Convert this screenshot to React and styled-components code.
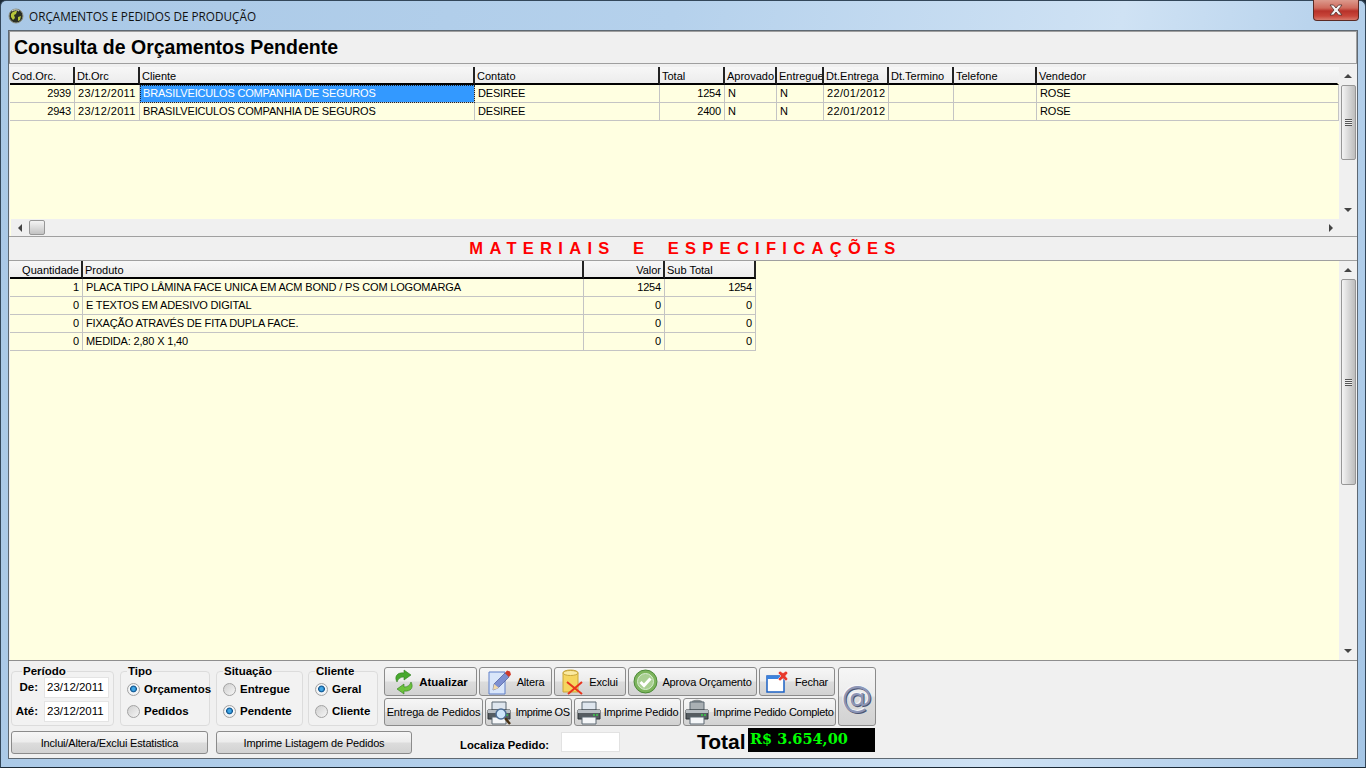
import styled, { createGlobalStyle } from "styled-components";

const GlobalStyle = createGlobalStyle`
  html, body {
    margin: 0;
    padding: 0;
    background: #1c2a36;
    overflow: hidden;
  }
  * { box-sizing: border-box; }
`;

const Frame = styled.div`
  width: 1366px;
  height: 768px;
  display: flex;
  flex-direction: column;
  padding: 0 8px 8px 8px;
  border: 1px solid #33475a;
  border-bottom: 1px solid #1c2a36;
  border-radius: 6px 6px 0 0;
  background: linear-gradient(100deg, #a9c8e6 0%, #b5d1ec 45%, #cfe2f4 75%, #a5c6e6 100%);
  font-family: "Liberation Sans", Arial, sans-serif;
  font-size: 11px;
  color: #000;
`;

const TitleBar = styled.div`
  height: 29px;
  margin: 0 -1px;
  display: flex;
  align-items: center;
  gap: 5px;
  font-family: "Open Sans", sans-serif;
  font-size: 11.75px;
  color: #111;
  flex-shrink: 0;
  position: relative;
`;

const CloseBtn = styled.div`
  position: absolute;
  right: -1px;
  top: -1px;
  width: 46px;
  height: 21px;
  border: 1px solid #5b2a24;
  border-top: none;
  border-radius: 0 0 4px 4px;
  background: linear-gradient(#dc9a8d 0%, #cf6a5c 40%, #b8322a 55%, #c8463a 80%, #d77a6c 100%);
  display: flex;
  align-items: center;
  justify-content: center;
`;

const Client = styled.div`
  flex: 1;
  min-height: 0;
  margin: 0 -1px;
  display: flex;
  flex-direction: column;
  background: #f0f0f0;
  border: 1px solid #5e6872;
`;

const HeaderPanel = styled.div`
  height: 33px;
  flex-shrink: 0;
  padding-left: 4px;
  display: flex;
  align-items: center;
  border: 1px solid #9f9f9f;
  border-left-color: #8a8a8a;
  font-size: 19.5px;
  font-weight: bold;
`;

const GridArea = styled.div`
  display: flex;
  flex-shrink: 0;
  height: ${p => p.$height}px;
  margin-top: ${p => p.$top || 0}px;
  padding-left: 1px;
`;

const GridBody = styled.div`
  flex: 1;
  min-width: 0;
  display: flex;
  flex-direction: column;
  background: #ffffe1;
`;

const HeadRow = styled.div`
  height: 18px;
  flex-shrink: 0;
  display: grid;
  grid-template-columns: ${p => p.$cols};
`;

const HeadCell = styled.div`
  height: 18px;
  line-height: 18px;
  padding: 0 0 0 2px;
  white-space: nowrap;
  overflow: hidden;
  text-align: ${p => p.$right ? "right" : "left"};
  padding-right: ${p => p.$right ? 2 : 0}px;
  border-right: 2px solid ${p => p.$open ? "transparent" : "#222"};
  border-bottom: 2px solid #000;
  background: linear-gradient(#f7f7f7, #ececec);
`;

const Row = styled.div`
  height: 18px;
  flex-shrink: 0;
  display: grid;
  grid-template-columns: ${p => p.$cols};
`;

const Cell = styled.div`
  height: 18px;
  line-height: 17px;
  padding: 0 3px 0 3px;
  white-space: nowrap;
  overflow: hidden;
  letter-spacing: ${p => p.$date ? "0.35px" : "-0.17px"};
  text-align: ${p => p.$right ? "right" : "left"};
  border-right: 1px solid #c4c4c4;
  border-bottom: 1px solid #c4c4c4;
  ${p => p.$selected && `
    background: #3399ff;
    color: #fff;
    outline: 1px dotted #222;
    outline-offset: -1px;
  `}
`;

const VScroll = styled.div`
  width: 18px;
  flex-shrink: 0;
  display: flex;
  flex-direction: column;
  align-items: center;
  background: #f0f0f0;
`;

const ArrowBox = styled.div`
  height: 18px;
  width: 17px;
  flex-shrink: 0;
  margin-bottom: ${p => p.$bottom || 0}px;
  display: flex;
  align-items: center;
  justify-content: center;
`;

const ArrowUp = styled.span`
  width: 0;
  height: 0;
  border-left: 4px solid transparent;
  border-right: 4px solid transparent;
  border-bottom: 4px solid #444;
`;

const ArrowDown = styled(ArrowUp)`
  border-bottom: none;
  border-top: 4px solid #444;
`;

const ArrowLeft = styled.span`
  width: 0;
  height: 0;
  border-top: 4px solid transparent;
  border-bottom: 4px solid transparent;
  border-right: 4px solid #444;
`;

const ArrowRight = styled(ArrowLeft)`
  border-right: none;
  border-left: 4px solid #444;
`;

const VThumb = styled.div`
  width: 15px;
  height: ${p => p.$height}px;
  flex-shrink: 0;
  border: 1px solid #979797;
  border-radius: 2px;
  background: linear-gradient(90deg, #f4f4f4, #d8d8d8 50%, #bdbdbd);
  display: flex;
  align-items: center;
  justify-content: center;
`;

const Grip = styled.div`
  width: 7px;
  height: 7px;
  background: repeating-linear-gradient(#555 0 1px, #eee 1px 2px);
`;

const Spacer = styled.div`
  flex: 1;
`;

const HScroll = styled.div`
  height: 17px;
  flex-shrink: 0;
  margin-left: 1px;
  display: flex;
  align-items: center;
  background: #f0f0f0;
`;

const HThumb = styled.div`
  width: 16px;
  height: 15px;
  margin-left: 1px;
  border: 1px solid #979797;
  border-radius: 2px;
  background: linear-gradient(#f4f4f4, #dcdcdc 50%, #c2c2c2);
`;

const SectionTitle = styled.div`
  height: 25px;
  flex-shrink: 0;
  padding-left: 5px;
  border-top: 1px solid #a0a0a0;
  border-bottom: 1px solid #a0a0a0;
  text-align: center;
  line-height: 22px;
  color: #ff0000;
  font-size: 16.5px;
  font-weight: bold;
  letter-spacing: 6.3px;
  word-spacing: 6.5px;
  white-space: pre;
`;

const BottomPanel = styled.div`
  flex: 1;
  min-height: 0;
  border-top: 1px solid #8e8e8e;
  display: flex;
  flex-direction: column;
  padding: 4px 0 0 2px;
`;

const TopLine = styled.div`
  display: flex;
  height: 63px;
`;

const GroupBox = styled.fieldset`
  width: ${p => p.$w}px;
  height: 61px;
  margin: 0 ${p => p.$gap}px 0 0;
  padding: ${p => p.$pad || 0}px 0 0 0;
  min-width: 0;
  border: 1px solid #dcdcdc;
  border-radius: 4px;
  display: flex;
  flex-direction: column;
  background: #f2f2f2;
`;

const Legend = styled.legend`
  margin-left: ${p => p.$left || 6}px;
  padding: 0 1px;
  font-size: 11.5px;
  font-weight: bold;
  line-height: 12px;
`;

const DateRow = styled.div`
  display: flex;
  align-items: flex-start;
  height: 25px;
  justify-content: flex-end;
  padding-right: 4px;
  gap: 6px;
`;

const FieldLabel = styled.span`
  font-weight: bold;
  font-size: 11.5px;
  line-height: 21px;
`;

const DateBox = styled.div`
  width: 65px;
  height: 21px;
  background: #fff;
  border: 1px solid #e4e4e4;
  line-height: 18px;
  padding-left: 2px;
  font-size: 11.5px;
`;

const RadioRow = styled.div`
  display: flex;
  align-items: center;
  height: 22px;
  padding-left: 6px;
  gap: 4px;
  font-weight: bold;
  font-size: 11.5px;
  white-space: nowrap;
`;

const Radio = styled.span`
  width: 13px;
  height: 13px;
  flex-shrink: 0;
  border-radius: 50%;
  border: 1px solid #a2a2a2;
  background: ${p => p.$on
    ? "radial-gradient(circle at 50% 45%, #3fa6e6 0 1.5px, #0a4f8a 3px, #f6f8fa 3.8px, #e2e2e2 100%)"
    : "linear-gradient(135deg, #cfcfcf, #f6f6f6)"};
`;

const ButtonsCol = styled.div`
  display: flex;
  flex-direction: column;
  gap: 2px;
  margin-top: 2px;
`;

const ButtonLine = styled.div`
  display: flex;
  gap: 2px;
`;

const Btn = styled.div`
  width: ${p => p.$w}px;
  height: ${p => p.$h || 29}px;
  flex-shrink: 0;
  display: flex;
  align-items: center;
  justify-content: center;
  gap: ${p => p.$gap ?? 5}px;
  border: 1px solid #8b8b8b;
  border-radius: 3px;
  background: linear-gradient(#f6f6f6 0%, #ececec 48%, #dcdcdc 52%, #d2d2d2 100%);
  font-weight: ${p => p.$bold ? "bold" : "normal"};
  font-size: ${p => p.$bold ? "11.5px" : "11px"};
  letter-spacing: ${p => p.$bold ? 0 : (p.$ls ?? -0.17)}px;
  white-space: nowrap;
`;

const AtBtn = styled(Btn)`
  margin: 2px 0 0 2px;
  font-size: 31px;
  font-family: "DejaVu Sans", sans-serif;
  color: #8d96b6;
  text-shadow: 1px 1px 0 #4a5472, -1px -1px 0 #f4f6fb;
`;

const BottomLine = styled.div`
  display: flex;
  align-items: flex-start;
`;

const WideBtn = styled(Btn)`
  margin: 3px ${p => p.$gap}px 0 0;
  height: 23px;
`;

const FindLabel = styled.span`
  width: 90px;
  margin: 11px 11px 0 0;
  font-weight: bold;
  font-size: 11.3px;
  white-space: nowrap;
`;

const FindBox = styled.div`
  width: 59px;
  height: 20px;
  margin: 4px 77px 0 0;
  background: #fff;
  border: 1px solid #e2e2e2;
`;

const TotalLabel = styled.span`
  width: 51px;
  font-size: 21px;
  font-weight: bold;
  line-height: 25px;
  margin-top: 1px;
`;

const TotalBox = styled.div`
  width: 127px;
  height: 24px;
  background: #000;
  color: #00ff00;
  padding-left: 2px;
  line-height: 22px;
  font-family: "DejaVu Serif", serif;
  font-size: 14.5px;
  font-weight: bold;
`;

/* icons */
const Globe = () => (
  <svg width="16" height="16" viewBox="0 0 16 16">
    <circle cx="8" cy="8" r="7" fill="#2b2f24" stroke="#8b8e80" />
    <path d="M3 6c2-3 4-3 6-3l-1 3-2 1 1 3-2 2-2-3zM10 9l3-1-1 4-2 1z" fill="#b9c63a" />
    <path d="M4 3c2-1.500 5-1.500 7 0" stroke="#e8e8d8" fill="none" />
  </svg>
);

const CloseGlyph = () => (
  <svg width="16" height="12" viewBox="0 0 16 12">
    <path d="M2 1h3.500L8 4l2.500-3H14l-4 5 4 5h-3.500L8 8l-2.500 3H2l4-5z" fill="#f4f4f4" stroke="#50312c" strokeWidth="0.8" />
  </svg>
);

const SyncIcon = () => (
  <svg width="22" height="26" viewBox="0 0 22 26">
    <path d="M11 1l7 5-7 5V8C7 8 5 10 4 13 1 8 4 3 11 4z" fill="#48a82e" stroke="#2f7d1f" strokeWidth="0.6" />
    <path d="M11 25l-7-5 7-5v3c4 0 6-2 7-5 3 5 0 10-7 9z" fill="#6cc23c" stroke="#2f7d1f" strokeWidth="0.6" />
  </svg>
);

const EditIcon = () => (
  <svg width="26" height="26" viewBox="0 0 26 26">
    <path d="M2 3h16v22H2z" fill="#d9e6fa" stroke="#5f7fc8" />
    <path d="M6 21l1-6L18 4l4 4-11 11z" fill="#7d8fd0" stroke="#3b4a8c" strokeWidth="0.6" />
    <path d="M18 4l2-2.500 3 1 1 3-2 2.500z" fill="#d03a2a" />
    <path d="M6 21l1-6 5 4z" fill="#f0d8a8" />
  </svg>
);

const DeleteIcon = () => (
  <svg width="22" height="26" viewBox="0 0 22 26">
    <path d="M1 4c0-4 15-4 15 0v19H1z" fill="#f5d55f" stroke="#c9a63a" />
    <ellipse cx="8.500" cy="4" rx="7.500" ry="2.500" fill="#fbeaa0" stroke="#c9a63a" />
    <path d="M5 13l15 12M20 13L6 25" stroke="#e8331c" strokeWidth="2" />
  </svg>
);

const CheckIcon = () => (
  <svg width="25" height="25" viewBox="0 0 25 25">
    <circle cx="12.500" cy="12.500" r="11.500" fill="#7cb45c" stroke="#4d8a3a" />
    <circle cx="12.500" cy="12.500" r="8" fill="#a9cf92" stroke="#d8ecd0" />
    <path d="M7.500 13l3.500 3.500 6.500-7" stroke="#fff" strokeWidth="3" fill="none" />
  </svg>
);

const WinCloseIcon = () => (
  <svg width="24" height="24" viewBox="0 0 24 24">
    <path d="M1 6h17v16H1z" fill="#fff" stroke="#1c62c4" strokeWidth="1.500" />
    <path d="M1 6h17v3H1z" fill="#3b82de" />
    <path d="M14 1l3 2 3-2 2 2-2.500 3L22 9l-2 2-3-2.500L14 11l-2-2 3-3-3-3z" fill="#e8392c" stroke="#fff" strokeWidth="0.5" />
  </svg>
);

const PrinterIcon = ({ lock, lens }) => (
  <svg width="24" height="26" viewBox="0 0 24 26">
    {lock && <path d="M7 9V5c0-4 10-4 10 0v4" fill="none" stroke="#8a8f92" strokeWidth="2.500" />}
    <path d="M5 3h14v8H5z" fill={lock ? "#aab0b4" : "#dfe6ee"} stroke="#5b6670" />
    <path d="M1 11h22v9H1z" fill="#555c61" stroke="#2f3438" />
    <path d="M1 11h22v3H1z" fill="#b9bfc4" />
    <circle cx="17" cy="16" r="1" fill="#3ad04a" />
    <circle cx="20" cy="16" r="1" fill="#3ad04a" />
    <path d="M5 18h14v7H5z" fill="#f4f6f8" stroke="#5b6670" />
    {lens && <>
      <circle cx="14" cy="15" r="5" fill="#cfe6fa" stroke="#4d6d94" strokeWidth="1.500" />
      <path d="M18 19l5 6" stroke="#4a3316" strokeWidth="2.500" />
    </>}
  </svg>
);

const orcCols = "65px 65px 335px 185px 65px 52px 47px 65px 65px 83px 1fr";
const orcHead = ["Cod.Orc.", "Dt.Orc", "Cliente", "Contato", "Total", "Aprovado", "Entregue", "Dt.Entrega", "Dt.Termino", "Telefone", "Vendedor"];
const orcRows = [
  ["2939", "23/12/2011", "BRASILVEICULOS COMPANHIA DE SEGUROS", "DESIREE", "1254", "N", "N", "22/01/2012", "", "", "ROSE"],
  ["2943", "23/12/2011", "BRASILVEICULOS COMPANHIA DE SEGUROS", "DESIREE", "2400", "N", "N", "22/01/2012", "", "", "ROSE"],
];
const orcRight = [0, 4];

const matCols = "73px 501px 81px 91px";
const matHead = ["Quantidade", "Produto", "Valor", "Sub Total"];
const matRows = [
  ["1", "PLACA TIPO LÂMINA FACE UNICA EM ACM BOND / PS COM LOGOMARGA", "1254", "1254"],
  ["0", "E TEXTOS EM  ADESIVO DIGITAL", "0", "0"],
  ["0", "FIXAÇÃO ATRAVÉS DE FITA DUPLA FACE.", "0", "0"],
  ["0", "MEDIDA: 2,80 X 1,40", "0", "0"],
];
const matRight = [0, 2, 3];
const isDate = text => /^\d\d\/\d\d\//.test(text);

const App = () => (
  <>
    <GlobalStyle />
    <Frame>
      <TitleBar>
        <Globe />
        <span>ORÇAMENTOS E PEDIDOS DE PRODUÇÃO</span>
        <CloseBtn><CloseGlyph /></CloseBtn>
      </TitleBar>
      <Client>
        <HeaderPanel>Consulta de Orçamentos Pendente</HeaderPanel>
        <GridArea $height={169} $top={3}>
          <GridBody>
            <HeadRow $cols={orcCols}>
              {orcHead.map((h, i) => <HeadCell key={h} $open={i === orcHead.length - 1}>{h}</HeadCell>)}
            </HeadRow>
            {orcRows.map((r, i) => (
              <Row key={i} $cols={orcCols}>
                {r.map((c, j) => (
                  <Cell key={j} $date={isDate(c)} $right={orcRight.includes(j)} $selected={i === 0 && j === 2}>{c}</Cell>
                ))}
              </Row>
            ))}
            <Spacer />
            <HScroll>
              <ArrowBox><ArrowLeft /></ArrowBox>
              <HThumb />
              <Spacer />
              <ArrowBox><ArrowRight /></ArrowBox>
            </HScroll>
          </GridBody>
          <VScroll>
            <ArrowBox><ArrowUp /></ArrowBox>
            <VThumb $height={75}><Grip /></VThumb>
            <Spacer />
            <ArrowBox $bottom={17}><ArrowDown /></ArrowBox>
          </VScroll>
        </GridArea>
        <SectionTitle>MATERIAIS E ESPECIFICAÇÕES</SectionTitle>
        <GridArea $height={399}>
          <GridBody>
            <HeadRow $cols={matCols}>
              {matHead.map((h, i) => <HeadCell key={h} $right={i === 0 || i === 2}>{h}</HeadCell>)}
            </HeadRow>
            {matRows.map((r, i) => (
              <Row key={i} $cols={matCols}>
                {r.map((c, j) => <Cell key={j} $right={matRight.includes(j)}>{c}</Cell>)}
              </Row>
            ))}
          </GridBody>
          <VScroll>
            <ArrowBox><ArrowUp /></ArrowBox>
            <VThumb $height={206}><Grip /></VThumb>
            <Spacer />
            <ArrowBox><ArrowDown /></ArrowBox>
          </VScroll>
        </GridArea>
        <BottomPanel>
          <TopLine>
            <GroupBox $w={103} $gap={6}>
              <Legend $left={10}>Período</Legend>
              <DateRow><FieldLabel>De:</FieldLabel><DateBox>23/12/2011</DateBox></DateRow>
              <DateRow><FieldLabel>Até:</FieldLabel><DateBox>23/12/2011</DateBox></DateRow>
            </GroupBox>
            <GroupBox $w={90} $gap={6} $pad={1}>
              <Legend>Tipo</Legend>
              <RadioRow><Radio $on />Orçamentos</RadioRow>
              <RadioRow><Radio />Pedidos</RadioRow>
            </GroupBox>
            <GroupBox $w={87} $gap={5} $pad={1}>
              <Legend>Situação</Legend>
              <RadioRow><Radio />Entregue</RadioRow>
              <RadioRow><Radio $on />Pendente</RadioRow>
            </GroupBox>
            <GroupBox $w={70} $gap={6} $pad={1}>
              <Legend>Cliente</Legend>
              <RadioRow><Radio $on />Geral</RadioRow>
              <RadioRow><Radio />Cliente</RadioRow>
            </GroupBox>
            <ButtonsCol>
              <ButtonLine>
                <Btn $w={93} $bold $gap={4}><SyncIcon />Atualizar</Btn>
                <Btn $w={73} $gap={4}><EditIcon />Altera</Btn>
                <Btn $w={72}><DeleteIcon />Exclui</Btn>
                <Btn $w={129} $gap={4} $ls={-0.2}><CheckIcon />Aprova Orçamento</Btn>
                <Btn $w={76}><WinCloseIcon />Fechar</Btn>
              </ButtonLine>
              <ButtonLine>
                <Btn $w={99} $h={28}>Entrega de Pedidos</Btn>
                <Btn $w={87} $h={28} $gap={4} $ls={-0.45}><PrinterIcon lens />Imprime OS</Btn>
                <Btn $w={107} $h={28} $gap={3}><PrinterIcon />Imprime Pedido</Btn>
                <Btn $w={153} $h={28} $gap={4} $ls={-0.3}><PrinterIcon lock />Imprime Pedido Completo</Btn>
              </ButtonLine>
            </ButtonsCol>
            <AtBtn $w={38} $h={59}>@</AtBtn>
          </TopLine>
          <BottomLine>
            <WideBtn $w={197} $gap={8}>Inclui/Altera/Exclui Estatistica</WideBtn>
            <WideBtn $w={196} $gap={48}>Imprime Listagem de Pedidos</WideBtn>
            <FindLabel>Localiza Pedido:</FindLabel>
            <FindBox />
            <TotalLabel>Total</TotalLabel>
            <TotalBox>R$ 3.654,00</TotalBox>
          </BottomLine>
        </BottomPanel>
      </Client>
    </Frame>
  </>
);

export default App;
